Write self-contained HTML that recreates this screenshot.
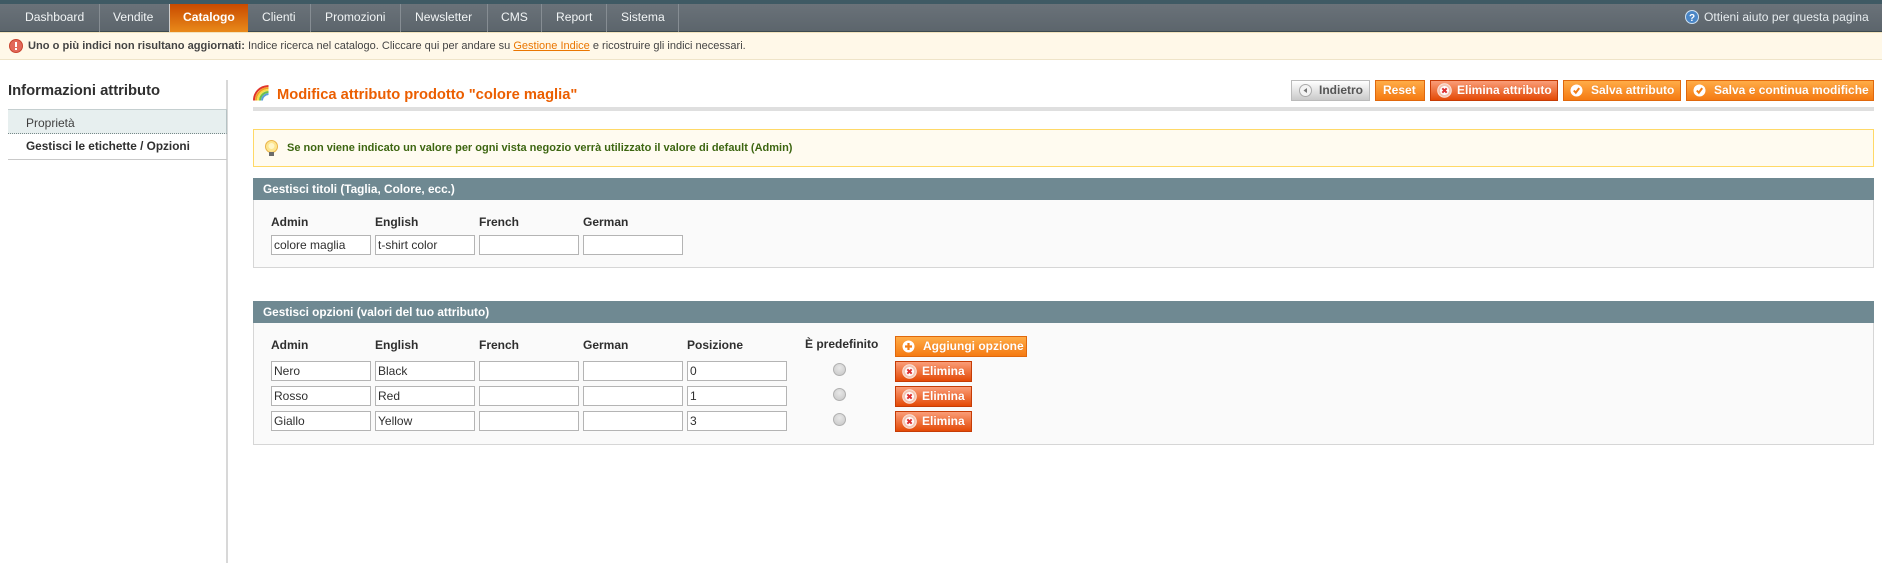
<!DOCTYPE html>
<html><head><meta charset="utf-8"><style>
html,body{margin:0;padding:0;background:#fff}
body{width:1882px;height:563px;position:relative;overflow:hidden;font-family:"Liberation Sans",sans-serif;font-size:12px;color:#2f2f2f}
.a{position:absolute;white-space:nowrap}
.nav{position:absolute;left:0;top:0;width:1882px;height:32px;background:linear-gradient(#6a7279,#5c656c);border-bottom:1px solid #3d4a50;box-sizing:border-box;border-top:4px solid #3f5a64}
.n{position:absolute;top:10px;color:#f1f4f5;font-size:12.1px;line-height:15px;white-space:nowrap}
.s{position:absolute;top:4px;width:1px;height:28px;background:#868d93}
.cat{position:absolute;left:170px;top:4px;width:78px;height:28px;background:linear-gradient(#c84a00,#e98a1a)}
.not{position:absolute;left:0;top:32px;width:1882px;height:28px;box-sizing:border-box;background:#fff8e8;border-top:1px solid #f2e3bd;border-bottom:1px solid #efe4c8}
.bt{position:absolute;top:80px;height:21px;box-sizing:border-box;color:#fff;font-weight:bold;font-size:12px;line-height:19px;white-space:nowrap;text-shadow:0 0 1px #e07a20}
.o{background:linear-gradient(#ffac47,#f57a12);border:1px solid #e0680c}
.r{background:linear-gradient(#fa9d78,#e44a06);border:1px solid #c63c06;text-shadow:0 0 1px #d85a28}
.h{position:absolute;left:253px;width:1621px;box-sizing:border-box;background:#6f8992;color:#fff;font-weight:bold;font-size:11.8px;padding-left:10px}
.p{position:absolute;left:253px;width:1621px;box-sizing:border-box;background:#fafafa;border:1px solid #d6d6d6;border-top:0}
.l{position:absolute;font-weight:bold;font-size:12px;color:#2f2f2f;line-height:14px;white-space:nowrap}
.i{position:absolute;box-sizing:border-box;width:100px;height:20px;background:#fff;border:1px solid #b4b4b4;font-size:12px;line-height:18px;padding-left:2px;color:#2f2f2f;white-space:nowrap;overflow:hidden}
.rd{position:absolute;left:833px;width:13px;height:13px;border-radius:50%;border:1px solid #b0b0b0;box-sizing:border-box;background:radial-gradient(circle at 50% 35%,#e8e8e8,#c6c6c6)}
svg{position:absolute}
</style></head><body>
<div class="nav"></div>
<div class="cat"></div>
<div class="s" style="left:99px"></div><div class="s" style="left:169px;background:#ccc"></div><div class="s" style="left:310px"></div><div class="s" style="left:400px"></div><div class="s" style="left:487px"></div><div class="s" style="left:541px"></div><div class="s" style="left:606px"></div><div class="s" style="left:678px"></div>
<div class="n" style="left:25px">Dashboard</div>
<div class="n" style="left:113px">Vendite</div>
<div class="n" style="left:183px;font-weight:bold;color:#fff">Catalogo</div>
<div class="n" style="left:262px">Clienti</div>
<div class="n" style="left:325px">Promozioni</div>
<div class="n" style="left:415px">Newsletter</div>
<div class="n" style="left:501px">CMS</div>
<div class="n" style="left:556px">Report</div>
<div class="n" style="left:621px">Sistema</div>
<svg style="left:1685px;top:10px" width="14" height="14" viewBox="0 0 14 14"><circle cx="7" cy="7" r="6.5" fill="#4a86c6" stroke="#cfe2f3"/><text x="7" y="11" text-anchor="middle" font-size="10" font-weight="bold" fill="#fff" font-family="Liberation Sans">?</text></svg>
<div class="n" style="left:1704px;color:#e6ebee">Ottieni aiuto per questa pagina</div>

<div class="not"></div>
<svg style="left:9px;top:39px" width="14" height="14" viewBox="0 0 14 14"><circle cx="7" cy="7" r="6.5" fill="#e2685a" stroke="#c9452f"/><rect x="6" y="3" width="2" height="5" fill="#fff"/><rect x="6" y="9" width="2" height="2" fill="#fff"/></svg>
<div class="a" style="left:28px;top:39px;font-size:11px;line-height:14px;color:#444"><b style="font-size:11.1px">Uno o più indici non risultano aggiornati:</b> Indice ricerca nel catalogo. Cliccare qui per andare su <span style="color:#ea7601;text-decoration:underline">Gestione Indice</span> e ricostruire gli indici necessari.</div>

<div class="a" style="left:8px;top:83px;font-size:14.8px;font-weight:bold;line-height:17px;color:#2f2f2f">Informazioni attributo</div>
<div class="a" style="left:226px;top:80px;width:2px;height:483px;background:#d8d8d8"></div>
<div class="a" style="left:8px;top:109px;width:219px;height:25px;box-sizing:border-box;background:#e7efef;border-top:1px solid #c5cfd0;border-bottom:1px dotted #788;border-right:1px solid #b5c2c4"></div>
<div class="a" style="left:26px;top:116px;font-size:12px;line-height:14px;color:#3f3f3f">Proprietà</div>
<div class="a" style="left:26px;top:139px;font-size:11.8px;line-height:14px;font-weight:bold;color:#2f2f2f">Gestisci le etichette / Opzioni</div>
<div class="a" style="left:8px;top:159px;width:219px;height:1px;background:#c9c9c9"></div>

<svg style="left:253px;top:85px" width="16" height="16" viewBox="0 0 16 16" fill="none"><path d="M1 15.5C1 8 6 1.5 15.5 1" stroke="#e0352a" stroke-width="2"/><path d="M3 15.5C3 9 8 3.2 15.5 3" stroke="#f2a024" stroke-width="2"/><path d="M5 15.5C5 10 9 5.2 15.5 5" stroke="#f4e04a" stroke-width="2"/><path d="M7 15.5C7 11 10.5 7.2 15.5 7" stroke="#6bbf4a" stroke-width="2"/><path d="M9 15.5C9 12 12 9.2 15.5 9" stroke="#5a9fd8" stroke-width="2"/></svg>
<div class="a" style="left:277px;top:86px;font-size:14.7px;font-weight:bold;line-height:18px;color:#eb5e00">Modifica attributo prodotto "colore maglia"</div>
<div class="a" style="left:253px;top:107px;width:1621px;height:4px;background:#dfdfdf"></div>

<div class="bt" style="left:1291px;width:79px;background:linear-gradient(#fff,#c9c9c9);border:1px solid #bbb;color:#555;text-shadow:none;padding-left:27px">Indietro</div>
<svg style="left:1299px;top:84px" width="13" height="13" viewBox="0 0 13 13"><circle cx="6.5" cy="6.5" r="6" fill="#f4f4f4" stroke="#aaa"/><path d="M8 4v5L4.5 6.5z" fill="#777"/></svg>
<div class="bt o" style="left:1375px;width:50px;padding-left:7px">Reset</div>
<div class="bt r" style="left:1430px;width:128px;padding-left:26px">Elimina attributo</div>
<svg style="left:1437px;top:83px" width="15" height="15" viewBox="0 0 15 15"><circle cx="7.5" cy="7.5" r="6.8" fill="#f3c4b2" stroke="#fbe3d9"/><circle cx="7.5" cy="7.5" r="4.5" fill="#fff"/><path d="M5.3 5.3l4.4 4.4M9.7 5.3l-4.4 4.4" stroke="#d33" stroke-width="2"/></svg>
<div class="bt o" style="left:1563px;width:118px;padding-left:27px">Salva attributo</div>
<svg style="left:1570px;top:84px" width="13" height="13" viewBox="0 0 13 13"><circle cx="6.5" cy="6.5" r="6" fill="#fff"/><path d="M3.8 6.5l2 2.2 3.4-4.6" stroke="#f27d14" stroke-width="2" fill="none"/></svg>
<div class="bt o" style="left:1686px;width:188px;padding-left:27px">Salva e continua modifiche</div>
<svg style="left:1693px;top:84px" width="13" height="13" viewBox="0 0 13 13"><circle cx="6.5" cy="6.5" r="6" fill="#fff"/><path d="M3.8 6.5l2 2.2 3.4-4.6" stroke="#f27d14" stroke-width="2" fill="none"/></svg>

<div class="a" style="left:253px;top:129px;width:1621px;height:38px;box-sizing:border-box;background:#fffbf0;border:1px solid #ffd967"></div>
<svg style="left:264px;top:140px" width="15" height="17" viewBox="0 0 15 17"><circle cx="7.5" cy="6.5" r="6" fill="#fde58f" stroke="#e9b34a"/><circle cx="7.5" cy="6" r="3" fill="#fff6c8"/><rect x="5" y="12" width="5" height="4" fill="#6b6b6b"/></svg>
<div class="a" style="left:287px;top:141px;font-size:11px;font-weight:bold;line-height:14px;color:#3d6611">Se non viene indicato un valore per ogni vista negozio verrà utilizzato il valore di default (Admin)</div>

<div class="h" style="top:178px;height:22px;line-height:22px">Gestisci titoli (Taglia, Colore, ecc.)</div>
<div class="p" style="top:200px;height:68px"></div>
<div class="l" style="left:271px;top:215px">Admin</div><div class="l" style="left:375px;top:215px">English</div><div class="l" style="left:479px;top:215px">French</div><div class="l" style="left:583px;top:215px">German</div>
<div class="i" style="left:271px;top:235px">colore maglia</div><div class="i" style="left:375px;top:235px">t-shirt color</div><div class="i" style="left:479px;top:235px"></div><div class="i" style="left:583px;top:235px"></div>

<div class="h" style="top:301px;height:22px;line-height:22px">Gestisci opzioni (valori del tuo attributo)</div>
<div class="p" style="top:323px;height:122px"></div>
<div class="l" style="left:271px;top:338px">Admin</div><div class="l" style="left:375px;top:338px">English</div><div class="l" style="left:479px;top:338px">French</div><div class="l" style="left:583px;top:338px">German</div><div class="l" style="left:687px;top:338px">Posizione</div><div class="l" style="left:805px;top:337px">È predefinito</div>
<div class="bt o" style="left:895px;top:336px;width:132px;padding-left:27px">Aggiungi opzione</div>
<svg style="left:902px;top:340px" width="13" height="13" viewBox="0 0 13 13"><circle cx="6.5" cy="6.5" r="6" fill="#fff"/><path d="M3 6.5h7M6.5 3v7" stroke="#f27d14" stroke-width="2.2"/></svg>

<div class="i" style="left:271px;top:361px">Nero</div><div class="i" style="left:375px;top:361px">Black</div><div class="i" style="left:479px;top:361px"></div><div class="i" style="left:583px;top:361px"></div><div class="i" style="left:687px;top:361px">0</div><div class="rd" style="top:363px"></div>
<div class="bt r" style="left:895px;top:361px;width:77px;padding-left:26px">Elimina</div>
<svg style="left:902px;top:364px" width="15" height="15" viewBox="0 0 15 15"><circle cx="7.5" cy="7.5" r="6.8" fill="#f3c4b2" stroke="#fbe3d9"/><circle cx="7.5" cy="7.5" r="4.5" fill="#fff"/><path d="M5.3 5.3l4.4 4.4M9.7 5.3l-4.4 4.4" stroke="#d33" stroke-width="2"/></svg>

<div class="i" style="left:271px;top:386px">Rosso</div><div class="i" style="left:375px;top:386px">Red</div><div class="i" style="left:479px;top:386px"></div><div class="i" style="left:583px;top:386px"></div><div class="i" style="left:687px;top:386px">1</div><div class="rd" style="top:388px"></div>
<div class="bt r" style="left:895px;top:386px;width:77px;padding-left:26px">Elimina</div>
<svg style="left:902px;top:389px" width="15" height="15" viewBox="0 0 15 15"><circle cx="7.5" cy="7.5" r="6.8" fill="#f3c4b2" stroke="#fbe3d9"/><circle cx="7.5" cy="7.5" r="4.5" fill="#fff"/><path d="M5.3 5.3l4.4 4.4M9.7 5.3l-4.4 4.4" stroke="#d33" stroke-width="2"/></svg>

<div class="i" style="left:271px;top:411px">Giallo</div><div class="i" style="left:375px;top:411px">Yellow</div><div class="i" style="left:479px;top:411px"></div><div class="i" style="left:583px;top:411px"></div><div class="i" style="left:687px;top:411px">3</div><div class="rd" style="top:413px"></div>
<div class="bt r" style="left:895px;top:411px;width:77px;padding-left:26px">Elimina</div>
<svg style="left:902px;top:414px" width="15" height="15" viewBox="0 0 15 15"><circle cx="7.5" cy="7.5" r="6.8" fill="#f3c4b2" stroke="#fbe3d9"/><circle cx="7.5" cy="7.5" r="4.5" fill="#fff"/><path d="M5.3 5.3l4.4 4.4M9.7 5.3l-4.4 4.4" stroke="#d33" stroke-width="2"/></svg>
</body></html>
